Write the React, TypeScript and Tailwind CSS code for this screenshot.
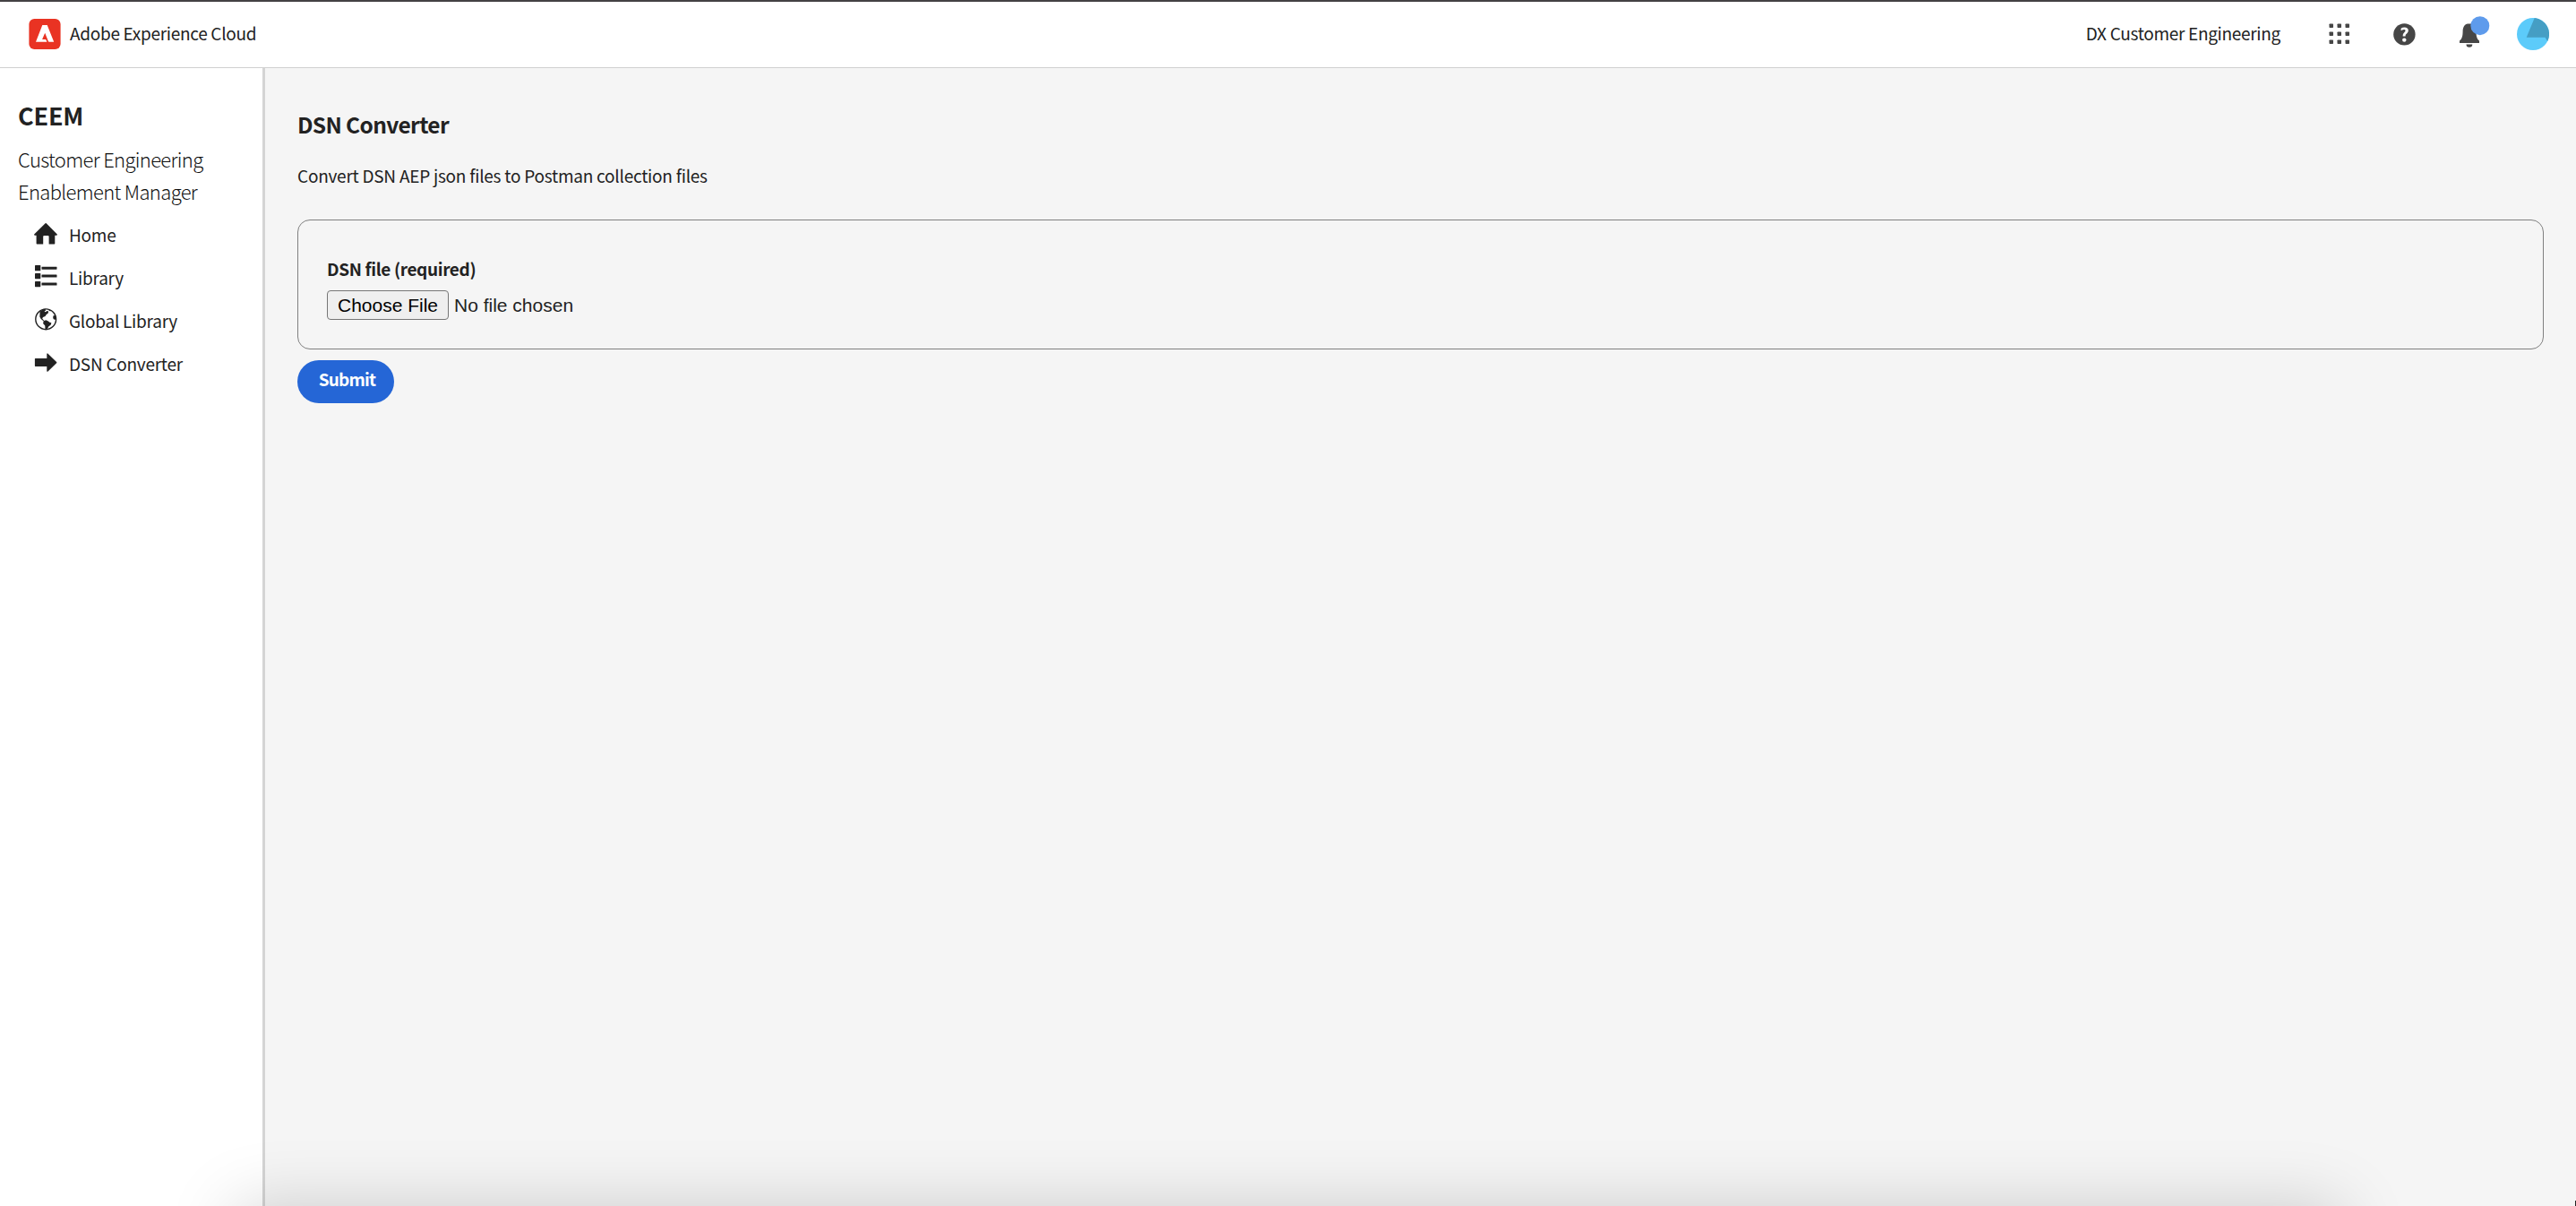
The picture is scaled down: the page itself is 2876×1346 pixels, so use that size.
import { useState } from 'react';
import type { ReactNode } from 'react';

interface NavItem {
  label: string;
  icon: ReactNode;
}

const HomeIcon = () => (
  <svg viewBox="0 -1 28 26" className="w-7 h-[26px]" fill="#222222">
    <path d="M13.6 1.2a1 1 0 0 1 1.1 0L26.6 13.3a.8.8 0 0 1-.6 1.4h-1.7v9.1a.7.7 0 0 1-.7.7h-6V16a1 1 0 0 0-1-1h-4.4a1 1 0 0 0-1 1v8.500H4.300a.7.7 0 0 1-.7-.7v-9.100H2a.8.8 0 0 1-.6-1.400z" />
  </svg>
);

const ListIcon = () => (
  <svg viewBox="0 0 28 26" className="w-7 h-[26px]" fill="#222222">
    <rect x="2" y="1" width="6.300" height="6.300" rx=".6" />
    <rect x="2" y="9.900" width="6.300" height="6.300" rx=".6" />
    <rect x="2" y="18.900" width="6.300" height="6.300" rx=".6" />
    <rect x="9.500" y="2.700" width="17" height="3" rx=".4" />
    <rect x="9.500" y="11.600" width="17" height="3" rx=".4" />
    <rect x="9.500" y="20.600" width="17" height="3" rx=".4" />
  </svg>
);

const GlobeIcon = () => (
  <svg viewBox="0 0 28 26" className="w-7 h-[26px]" fill="#222222">
    <circle cx="14.200" cy="13.300" r="11.400" fill="none" stroke="#222222" strokeWidth="1.400" />
    <path d="M7.300 4.700 11 2.200l2.400-.4.800 1.600-1.600.8.900 1 2.200-1.100 1.400.4-.3 1.900-2 1.600-1.300 2-2.500.9-.8 1.500 1.700 2.100 1.100 1-.9.3-3.400-2.700-1.400-2.700.2-3.700z" />
    <path d="m11.700 15.300 2.600-1 2.600 1.100 1.500 1.300 2 .6-.8 2.400-2.200 1.500-1.200 2.300-1.700 1.500h-1l-.2-4.600-2.200-2.300z" />
    <path d="m24.700 8.800-2.300.7-.2 2.400.9 1.500 2 .3.400-2.300zM17.500 2.300l2.600 1.200-.9.900-1.800-.9z" />
  </svg>
);

const ArrowIcon = () => (
  <svg viewBox="0 0 28 26" className="w-7 h-[26px]" fill="#222222">
    <path d="M2.500 8.900h12.800V3.900a.6.6 0 0 1 1-.4l9.800 9.500a.8.8 0 0 1 0 1.200l-9.800 9.500a.6.6 0 0 1-1-.4v-5.400H2.500a.6.6 0 0 1-.6-.6V9.500a.6.6 0 0 1 .6-.6z" />
  </svg>
);

const navItems: NavItem[] = [
  { label: 'Home', icon: <HomeIcon /> },
  { label: 'Library', icon: <ListIcon /> },
  { label: 'Global Library', icon: <GlobeIcon /> },
  { label: 'DSN Converter', icon: <ArrowIcon /> },
];

function Header() {
  return (
    <header className="flex h-[76px] shrink-0 items-center justify-between border-t-2 border-b border-t-[#434143] border-b-[#d0d0d0] bg-white pb-px pl-8 pr-[30px]">
      <div className="flex items-center">
        <svg viewBox="0 0 36 34" className="h-[34px] w-9">
          <rect x=".4" y="0" width="35.200" height="34" rx="6" fill="#e93323" />
          <path d="M15.300 7h5.400l7.500 18.700h-5.300a1 1 0 0 1-1-.7l-3.700-9.200-3.100 7.200h3.500c.4 0 .7.200.8.500l1 2.200H8z" fill="#ffffff" />
        </svg>
        <span className="mb-0.5 ml-[10px] whitespace-nowrap text-[19px] leading-8 tracking-[-0.3px]">Adobe Experience Cloud</span>
      </div>
      <div className="flex items-center">
        <span className="mb-0.5 whitespace-nowrap text-[19px] leading-8 tracking-[-0.3px]">DX Customer Engineering</span>
        <svg viewBox="0 0 24 24" className="mb-px ml-[54px] size-6" fill="#464646">
          {[0, 9, 18].map(y =>
            [0, 9, 18].map(x => <rect key={`${x}-${y}`} x={x + 0.5} y={y + 0.5} width="4.500" height="4.500" rx=".7" />)
          )}
        </svg>
        <svg viewBox="0 0 26 26" className="ml-[47px] size-[26px]">
          <circle cx="13.400" cy="13.400" r="12.200" fill="#464646" />
          <path d="M9.800 6.600c1-.8 2.300-1.200 3.700-1.200 2.600 0 4.300 1.400 4.300 3.600 0 1.700-.9 2.700-2 3.700-.9.900-1.200 1.300-1.200 2.300v.5h-2.900v-.9c0-1.500.6-2.400 1.600-3.400.8-.8 1.200-1.200 1.200-1.900s-.5-1.200-1.500-1.200c-.9 0-1.900.3-2.900.9-.4.200-.6 0-.6-.4z" fill="#ffffff" />
          <circle cx="13.300" cy="19.600" r="2.200" fill="#ffffff" />
        </svg>
        <svg viewBox="0 0 34 36" className="mb-1 ml-[49px] h-9 w-[34px]">
          <path d="M11.500 8.400c3.400 0 7 2.600 7 8.600 0 6 1.200 8.500 3.500 10.600V30H0v-2.400C2.300 25.500 3.600 23 3.600 17c0-5 2.300-8 5.500-8.500zM7.500 31.500h6.800a3.400 3.200 0 0 1-6.800 0z" fill="#464646" />
          <circle cx="22.800" cy="10.700" r="10.500" fill="#5e9bec" />
        </svg>
        <svg viewBox="0 0 36 36" className="ml-[30px] size-9">
          <circle cx="18" cy="18" r="18" fill="#5ccbfa" />
          <path d="M19.700.1A18 18 0 0 1 34.200 26l-2.700-4.200H10.700z" fill="#459ec4" />
        </svg>
      </div>
    </header>
  );
}

function Sidebar() {
  return (
    <aside className="w-[296px] shrink-0 border-r-[3px] border-[#d4d4d4] bg-white pt-[37px]">
      <h1 className="pl-5 text-[27px] font-bold leading-8 tracking-[-0.2px]">CEEM</h1>
      <p className="mt-[14px] pl-5 text-[22px] font-light leading-9 tracking-[-0.65px] text-[#111111]">
        Customer Engineering
        <br />
        Enablement Manager
      </p>
      <nav className="mt-[7px]">
        {navItems.map(item => (
          <a key={item.label} href="#" className="flex h-12 items-center pl-[37px]">
            <span className="-mt-1">{item.icon}</span>
            <span className="ml-3 whitespace-nowrap text-[19px] leading-8 tracking-[-0.25px]">{item.label}</span>
          </a>
        ))}
      </nav>
    </aside>
  );
}

function ConverterForm() {
  const [fileName, setFileName] = useState('No file chosen');

  return (
    <form onSubmit={e => e.preventDefault()}>
      <div className="mt-[33px] h-[145px] rounded-[14px] border border-[#808080] pl-8 pt-[38px]">
        <div className="text-[19px] font-bold leading-8 tracking-[-0.36px]">DSN file (required)</div>
        <label className="mt-2 flex h-[33px] items-center font-['Liberation_Sans',sans-serif] text-[21px]">
          <input type="file" className="hidden" onChange={e => setFileName(e.target.files?.[0]?.name ?? 'No file chosen')} />
          <span className="flex h-[33px] w-[136px] items-center justify-center whitespace-nowrap rounded-[4px] border border-[#767676] bg-[#efefef] text-black">
            Choose File
          </span>
          <span className="ml-[6px]">{fileName}</span>
        </label>
      </div>
      <button type="submit" className="mt-3 flex h-12 w-[108px] items-center justify-center rounded-full bg-[#2566d6] pb-1.5 pl-[3px] text-[19px] font-bold leading-8 tracking-[-0.8px] text-white">
        Submit
      </button>
    </form>
  );
}

export default function App() {
  return (
    <div className="relative flex h-[1346px] w-[2876px] flex-col overflow-hidden bg-[#f5f5f5] font-['Noto_Sans_CJK_SC',sans-serif] text-[#222222]">
      <Header />
      <div className="flex flex-1">
        <Sidebar />
        <main className="flex-1 pl-9 pr-9 pt-[47px]">
          <h2 className="text-[24.5px] font-bold leading-8 tracking-[-0.65px]">DSN Converter</h2>
          <p className="mt-[25px] text-[19px] leading-8 tracking-[-0.24px]">Convert DSN AEP json files to Postman collection files</p>
          <ConverterForm />
        </main>
      </div>
      <div className="pointer-events-none absolute -bottom-[200px] left-[262px] right-[262px] h-[200px] shadow-[0_0_76px_0_rgba(0,0,0,0.17)]" />
      <div className="absolute bottom-0 right-0 h-[6px] w-px bg-[#222222]" />
    </div>
  );
}
